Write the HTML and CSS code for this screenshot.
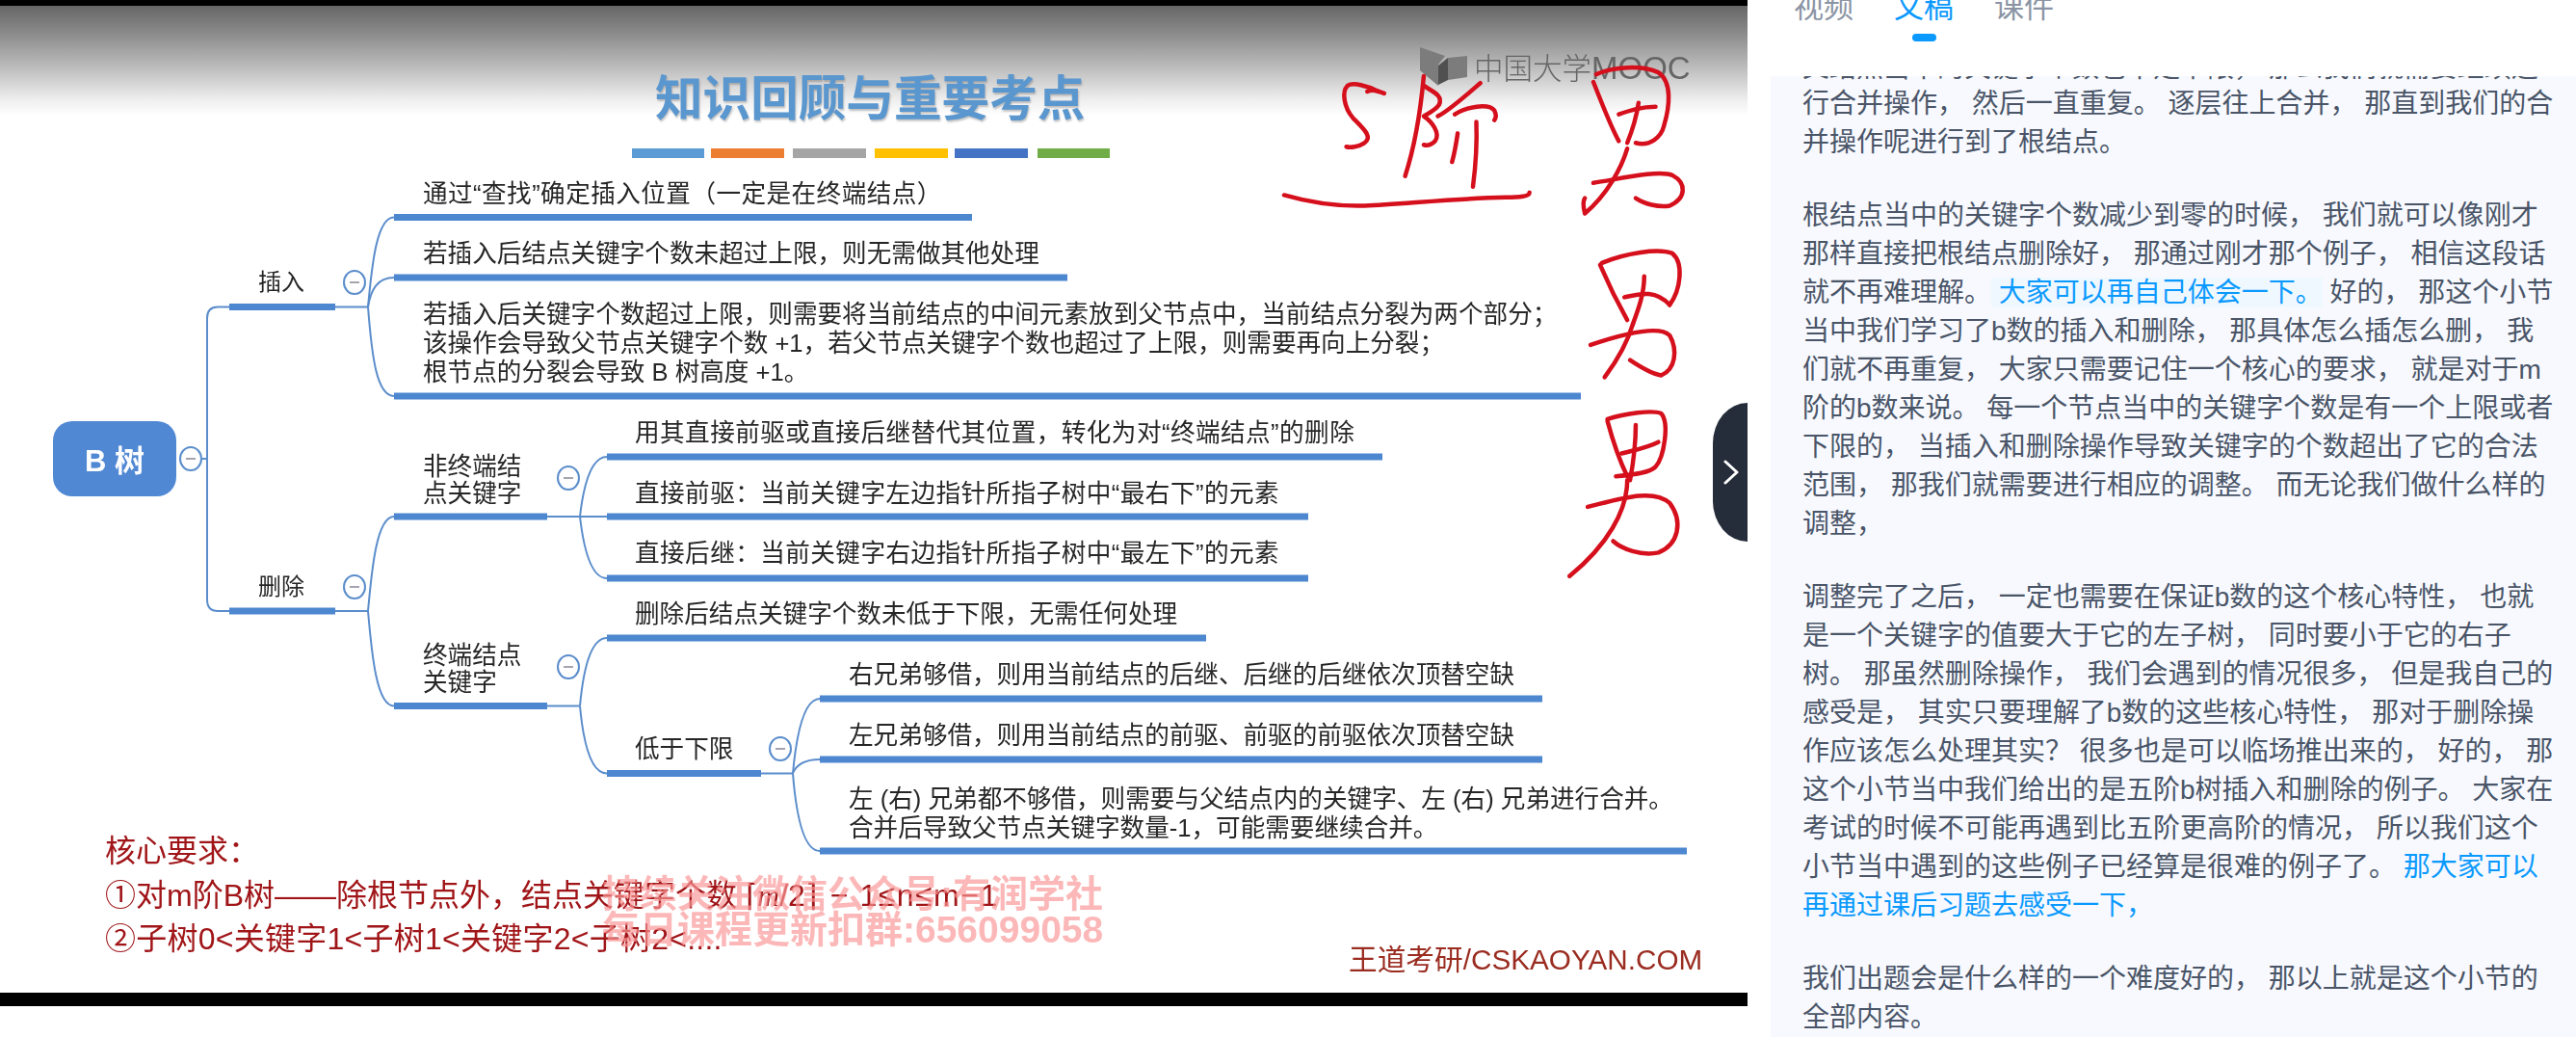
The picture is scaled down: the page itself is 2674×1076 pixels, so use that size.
FILE: index.html
```html
<!DOCTYPE html>
<html lang="zh-CN">
<head>
<meta charset="utf-8">
<title>B树 文稿</title>
<link rel="stylesheet" href="styles.css">
</head>
<body>
<div class="page">
  <section class="video">
    <div class="frame">
      <svg class="lines" width="1814" height="1044" viewBox="0 0 1814 1044">
        <g class="stripes">
          <rect class="s1" x="656" y="154" width="75" height="10"/>
          <rect class="s2" x="738" y="154" width="76" height="10"/>
          <rect class="s3" x="823" y="154" width="76" height="10"/>
          <rect class="s4" x="908" y="154" width="76" height="10"/>
          <rect class="s5" x="991" y="154" width="76" height="10"/>
          <rect class="s6" x="1077" y="154" width="75" height="10"/>
        </g>
        <g class="logo">
          <polygon class="lg1" points="1474,49 1500,58 1493,67 1493,89 1474,73"/>
          <polygon class="lg1" points="1503,60 1523,58 1523,80 1503,83"/>
          <polygon class="lg2" points="1493,68 1503,60 1503,83 1493,88"/>
        </g>
        <g class="conn">
          <path d="M210 476H215"/>
          <path d="M238 318.5H226Q215 318.5 215 330V622Q215 634 226 634H238"/>
          <path d="M348 318.5H382"/>
          <path d="M382 318.5C386 275 391 225.5 409 225.5"/>
          <path d="M382 318.5C385 300 392 288 409 288"/>
          <path d="M382 318.5C386 370 391 411 409 411"/>
          <path d="M348 634H382"/>
          <path d="M382 634C386 590 391 536 409 536"/>
          <path d="M382 634C386 680 391 732.5 409 732.5"/>
          <path d="M602 536C605 510 612 474 630 474"/>
          <path d="M568 536H630"/>
          <path d="M602 536C605 562 612 600 630 600"/>
          <path d="M568 732.5H602"/>
          <path d="M602 732.5C605 700 612 662 630 662"/>
          <path d="M602 732.5C605 765 612 802.5 630 802.5"/>
          <path d="M790 802.5H823"/>
          <path d="M823 802.5C826 770 833 725 851 725"/>
          <path d="M823 802.5C826 795 833 788 851 788"/>
          <path d="M823 802.5C826 840 833 883 851 883"/>
        </g>
        <g class="bars">
          <path d="M409 225.5H1009"/>
          <path d="M409 288H1108"/>
          <path d="M409 411H1641"/>
          <path d="M238 318.5H348"/>
          <path d="M238 634H348"/>
          <path d="M409 536H568"/>
          <path d="M630 474H1435"/>
          <path d="M630 536H1358"/>
          <path d="M630 600H1358"/>
          <path d="M409 732.5H568"/>
          <path d="M630 662H1252"/>
          <path d="M630 802.5H790"/>
          <path d="M851 725H1601"/>
          <path d="M851 788H1601"/>
          <path d="M851 883H1751"/>
        </g>
        <g class="toggles">
          <ellipse cx="198" cy="476" rx="11" ry="12"/><path d="M193 476h10"/>
          <ellipse cx="368" cy="293" rx="11" ry="12"/><path d="M363 293h10"/>
          <ellipse cx="368" cy="609" rx="11" ry="12"/><path d="M363 609h10"/>
          <ellipse cx="590" cy="496" rx="11" ry="12"/><path d="M585 496h10"/>
          <ellipse cx="590" cy="692" rx="11" ry="12"/><path d="M585 692h10"/>
          <ellipse cx="810" cy="777" rx="11" ry="12"/><path d="M805 777h10"/>
        </g>
      </svg>

      <h1 class="title">知识回顾与重要考点</h1>
      <div class="mooc">中国大学<span class="mooc-en">MOOC</span></div>

      <div class="root">B 树</div>
      <div class="node n-insert">插入</div>
      <div class="node n-delete">删除</div>
      <div class="node n-a1 quoted">通过“查找”确定插入位置（一定是在终端结点）</div>
      <div class="node n-a2">若插入后结点关键字个数未超过上限，则无需做其他处理</div>
      <div class="node n-a3">若插入后关键字个数超过上限，则需要将当前结点的中间元素放到父节点中，当前结点分裂为两个部分；<br>该操作会导致父节点关键字个数 +1，若父节点关键字个数也超过了上限，则需要再向上分裂；<br>根节点的分裂会导致 B 树高度 +1。</div>
      <div class="node n-b">非终端结<br>点关键字</div>
      <div class="node n-b1 quoted">用其直接前驱或直接后继替代其位置，转化为对“终端结点”的删除</div>
      <div class="node n-b2 quoted">直接前驱：当前关键字左边指针所指子树中“最右下”的元素</div>
      <div class="node n-b3 quoted">直接后继：当前关键字右边指针所指子树中“最左下”的元素</div>
      <div class="node n-c">终端结点<br>关键字</div>
      <div class="node n-c1">删除后结点关键字个数未低于下限，无需任何处理</div>
      <div class="node n-d">低于下限</div>
      <div class="node n-d1">右兄弟够借，则用当前结点的后继、后继的后继依次顶替空缺</div>
      <div class="node n-d2">左兄弟够借，则用当前结点的前驱、前驱的前驱依次顶替空缺</div>
      <div class="node n-d3">左 (右) 兄弟都不够借，则需要与父结点内的关键字、左 (右) 兄弟进行合并。<br>合并后导致父节点关键字数量-1，可能需要继续合并。</div>

      <div class="core">核心要求：<br>①对m阶B树——除根节点外，结点关键字个数<span class="ceil">⌈<i>m</i>/2⌉</span><span class="ineq">− 1≤n≤m−1</span><br><span class="tree">②子树0&lt;关键字1&lt;子树1&lt;关键字2&lt;子树2&lt;....</span></div>
      <div class="mark-text">持续关注微信公众号:有润学社<br>每日课程更新扣群:656099058</div>
      <div class="brand">王道考研/CSKAOYAN.COM</div>

      <svg class="ink" viewBox="0 0 1568 1568" preserveAspectRatio="none">
        <path d="M905 240C885 225 860 215 850 225C840 240 843 280 860 310C880 340 895 360 880 375C870 385 855 388 848 385"/>
        <path d="M885 240Q895 232 915 245"/>
        <path d="M985 200C980 280 970 380 952 462"/>
        <path d="M985 225C1000 240 1020 250 1012 275C1005 290 990 300 985 305C1000 320 1015 350 1005 370Q995 385 985 380"/>
        <path d="M1085 218C1060 250 1030 290 1010 305"/>
        <path d="M1040 300C1060 280 1100 270 1110 290Q1115 305 1110 315"/>
        <path d="M1045 350Q1040 400 1035 425"/>
        <path d="M1078 320Q1080 400 1072 490"/>
        <path d="M738 512C780 530 830 542 880 540C950 535 1050 520 1130 518C1155 518 1172 515 1172 505"/>

        <path d="M1285 215C1300 270 1315 330 1330 370"/>
        <path d="M1290 195C1320 175 1370 170 1400 190C1425 215 1420 280 1410 330C1405 360 1385 385 1360 375"/>
        <path d="M1330 300C1350 290 1370 280 1395 280"/>
        <path d="M1365 270Q1360 320 1345 375"/>
        <path d="M1285 480C1330 470 1400 445 1425 460C1450 480 1450 520 1420 540C1400 545 1375 535 1360 520"/>
        <path d="M1345 390C1335 440 1310 510 1270 560Q1265 530 1270 520"/>

        <path d="M1297 695C1310 740 1330 800 1345 840"/>
        <path d="M1300 690C1340 665 1400 650 1425 665C1445 690 1440 760 1420 800"/>
        <path d="M1340 780C1370 770 1395 760 1420 800"/>
        <path d="M1375 725C1375 770 1365 810 1355 850"/>
        <path d="M1280 905C1330 880 1400 850 1420 880C1435 920 1430 970 1405 985C1385 980 1365 960 1350 945"/>
        <path d="M1355 850C1345 900 1325 950 1305 990"/>

        <path d="M1310 1105C1320 1160 1335 1220 1345 1250"/>
        <path d="M1310 1100C1340 1085 1390 1075 1405 1085C1420 1110 1410 1200 1395 1225C1385 1240 1360 1245 1325 1250"/>
        <path d="M1335 1190C1360 1180 1380 1175 1400 1160"/>
        <path d="M1360 1115C1360 1170 1355 1220 1350 1260"/>
        <path d="M1275 1330C1330 1310 1390 1280 1420 1320C1445 1370 1435 1430 1400 1450C1370 1460 1335 1440 1320 1420"/>
        <path d="M1345 1260C1345 1340 1310 1430 1243 1512"/>
      </svg>
    </div>
    <button class="next" type="button" aria-label="收起">
      <svg width="16" height="26" viewBox="0 0 16 26"><path d="M2 2L14 13L2 24"/></svg>
    </button>
  </section>

  <aside class="side">
    <nav class="tabs">
      <div class="tab">视频</div>
      <div class="tab on">文稿</div>
      <div class="tab">课件</div>
    </nav>
    <div class="script">
      <div class="scroll">
        <p><span class="cut">父结点当中的关键字个数也不足下限， 那么我们就需要继续进</span>行合并操作， 然后一直重复。 逐层往上合并， 那直到我们的合并操作呢进行到了根结点。</p>
        <p>根结点当中的关键字个数减少到零的时候， 我们就可以像刚才那样直接把根结点删除好， 那通过刚才那个例子， 相信这段话就不再难理解。<span class="now"> 大家可以再自己体会一下。</span> 好的， 那这个小节当中我们学习了b数的插入和删除， 那具体怎么插怎么删， 我们就不再重复， 大家只需要记住一个核心的要求， 就是对于m阶的b数来说。 每一个节点当中的关键字个数是有一个上限或者下限的， 当插入和删除操作导致关键字的个数超出了它的合法范围， 那我们就需要进行相应的调整。 而无论我们做什么样的调整，</p>
        <p>调整完了之后， 一定也需要在保证b数的这个核心特性， 也就是一个关键字的值要大于它的左子树， 同时要小于它的右子树。 那虽然删除操作， 我们会遇到的情况很多， 但是我自己的感受是， 其实只要理解了b数的这些核心特性， 那对于删除操作应该怎么处理其实？ 很多也是可以临场推出来的， 好的， 那这个小节当中我们给出的是五阶b树插入和删除的例子。 大家在考试的时候不可能再遇到比五阶更高阶的情况， 所以我们这个小节当中遇到的这些例子已经算是很难的例子了。 <span class="hl">那大家可以再通过课后习题去感受一下，</span></p>
        <p>我们出题会是什么样的一个难度好的， 那以上就是这个小节的全部内容。</p>
      </div>
    </div>
  </aside>
</div>
</body>
</html>
```
FILE: styles.css
```css
* { box-sizing: border-box; }
html, body { margin: 0; padding: 0; height: 100%; background: #fff; overflow: hidden; }
body { font-family: "Liberation Sans", "Noto Sans CJK SC", sans-serif; }

.page { display: flex; width: 2674px; height: 1076px; }

/* video */
.video { position: relative; flex: 0 0 1814px; height: 1076px; background: #fff; }
.frame {
  position: relative;
  width: 1814px;
  height: 1044px;
  overflow: hidden;
  border-top: 6px solid #000;
  border-bottom: 14px solid #000;
  background: linear-gradient(180deg, #666 0, #8a8a8a 28px, #bbb 63px, #eee 97px, #fff 114px, #fff 100%);
  filter: blur(0.6px);
}
.lines { position: absolute; left: 0; top: -6px; }
.s1 { fill: #5b9bd5; } .s2 { fill: #ed7d31; } .s3 { fill: #a5a5a5; }
.s4 { fill: #ffc000; } .s5 { fill: #4472c4; } .s6 { fill: #70ad47; }
.lg1 { fill: #7c7c7c; } .lg2 { fill: #505050; }
.conn path { fill: none; stroke: #5b8dcb; stroke-width: 2; }
.bars path { fill: none; stroke: #4d87cf; stroke-width: 7; }
.toggles ellipse { fill: #fff; stroke: #5b8dcb; stroke-width: 2; }
.toggles path { fill: none; stroke: #a5a5b0; stroke-width: 2; }

.title {
  position: absolute; left: 680px; top: 64px; margin: 0;
  font: 700 49.6px/56px "Noto Sans CJK SC", sans-serif;
  color: #5b97cf; white-space: nowrap;
  text-shadow: 1px 2px 2px rgba(90, 90, 90, .35);
}
.mooc {
  position: absolute; left: 1530px; top: 44px;
  font: 300 30.5px/38px "Noto Sans CJK SC", sans-serif;
  color: #666; white-space: nowrap;
}
.mooc-en { font-family: "Liberation Sans", sans-serif; font-size: 33px; }

.root {
  position: absolute; left: 55px; top: 431px; width: 128px; height: 78px;
  padding-top: 5px;
  display: flex; align-items: center; justify-content: center;
  background: #5088d4; border-radius: 20px;
  color: #fff; font: 700 31px/40px "Liberation Sans", "Noto Sans CJK SC", sans-serif;
}

.node {
  position: absolute;
  font-size: 25.6px; line-height: 30px; color: #262626; white-space: nowrap;
}
.quoted { letter-spacing: .45px; }
.n-insert { left: 268px; top: 272px; font-size: 24px; }
.n-delete { left: 268px; top: 588px; font-size: 24px; }
.n-a1 { left: 439px; top: 180px; }
.n-a2 { left: 439px; top: 242px; }
.n-a3 { left: 439px; top: 305px; }
.n-b  { left: 439px; top: 464px; line-height: 28px; }
.n-b1 { left: 659px; top: 428px; }
.n-b2 { left: 659px; top: 491px; }
.n-b3 { left: 659px; top: 553px; }
.n-c  { left: 439px; top: 660px; line-height: 28px; }
.n-c1 { left: 659px; top: 616px; }
.n-d  { left: 659px; top: 756px; }
.n-d1 { left: 881px; top: 679px; }
.n-d2 { left: 881px; top: 742px; }
.n-d3 { left: 881px; top: 808px; }

.core {
  position: absolute; left: 109px; top: 855px;
  font-size: 32px; line-height: 45.5px; color: #a01518; white-space: nowrap;
}
.core i { font-family: "Liberation Serif", serif; }
.ceil { margin-left: 9px; margin-right: 14px; }
.ineq { letter-spacing: 1.5px; }
.tree { letter-spacing: .25px; }
.mark-text {
  position: absolute; left: 625px; top: 903px;
  font-size: 39px; line-height: 37px; font-weight: 700; color: rgba(250, 150, 150, .68);
  white-space: nowrap;
}
.brand {
  position: absolute; left: 1400px; top: 972px;
  font-size: 29.7px; line-height: 36px; color: #9a2c20; white-space: nowrap;
}

.ink { position: absolute; left: 900px; top: -6px; width: 920px; height: 620px; }
.ink path {
  fill: none; stroke: #d50f1c; stroke-width: 4.5;
  stroke-linecap: round; stroke-linejoin: round;
  vector-effect: non-scaling-stroke;
}

.next {
  position: absolute; left: 1778px; top: 418px; width: 36px; height: 144px;
  padding: 0 0 0 11px; border: 0;
  display: flex; align-items: center; justify-content: flex-start;
  background: #252c3a; border-radius: 36px 0 0 36px / 42px 0 0 42px;
}
.next path { fill: none; stroke: #fff; stroke-width: 3; stroke-linecap: round; stroke-linejoin: round; }

/* side panel */
.side { flex: 1 1 0; display: flex; flex-direction: column; height: 1076px; overflow: hidden; background: #fff; }
.tabs { flex: 0 0 79px; display: flex; gap: 42px; padding-left: 48px; overflow: hidden; }
.tab {
  position: relative; margin-top: -7px; height: 30px;
  font-size: 31px; line-height: 30px; color: #8a94a4;
}
.tab.on { color: #0a99ff; }
.tab.on::after {
  content: ""; position: absolute; left: 19px; top: 42px;
  width: 25px; height: 8px; border-radius: 4px; background: #0a99ff;
}
.script { flex: 1 1 0; margin-left: 24px; background: #f7f9fe; overflow: hidden; padding-left: 33px; }
.scroll { width: 784px; margin-top: -31px; }
.scroll p {
  margin: 0 0 36px;
  font-size: 28px; line-height: 40px; color: #4a5568;
}
.cut { position: relative; top: 3px; }
.now { color: #0a99ff; background: #f0f8ff; }
.hl { color: #0a99ff; }
```
